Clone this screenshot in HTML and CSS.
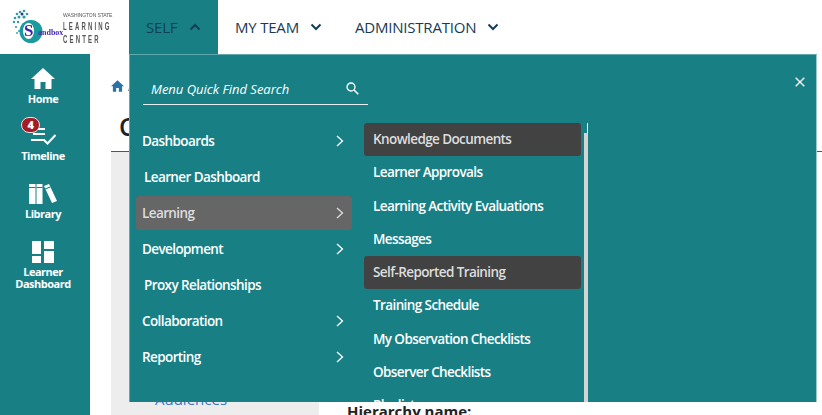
FILE: index.html
```html
<!DOCTYPE html>
<html lang="en">
<head>
<meta charset="utf-8">
<title>Learning Center</title>
<link rel="stylesheet" href="styles.css">
</head>
<body>
<header class="topbar">
  <div class="logo">
    <svg class="logo-mark" width="64" height="54" viewBox="0 0 64 54">
      <circle cx="31" cy="31.500" r="11.500" fill="#1a9a9e"/>
      <ellipse cx="28.500" cy="31" rx="5.500" ry="8" fill="#fff"/>
      <g fill="#2f9aa5"><circle cx="17" cy="14" r="1.300"/><circle cx="20" cy="12" r="1.300"/><circle cx="24" cy="11" r="1.300"/><circle cx="15" cy="18" r="1.300"/><circle cx="19" cy="17" r="1.500"/><circle cx="24" cy="17" r="1.600"/><circle cx="27" cy="14" r="1.300"/><circle cx="14" cy="22" r="1.200"/><circle cx="18" cy="22" r="1.200"/><circle cx="16" cy="27" r="1.100"/><circle cx="19" cy="31" r="1"/><circle cx="17" cy="33" r=".9"/></g>
      <circle cx="22" cy="14" r="1.500" fill="#243c7a"/>
    </svg>
    <span class="logo-s">S</span><span class="logo-sandbox">andbox</span>
    <div class="logo-text">
      <span class="logo-state">WASHINGTON STATE</span>
      <span class="logo-line">LEARNING</span>
      <span class="logo-line">CENTER</span>
    </div>
  </div>
  <nav class="topnav">
    <a class="tab active">SELF
      <svg class="chev" width="12" height="8" viewBox="0 0 12 8"><path d="M1.500 6.500 6 2l4.500 4.500" fill="none" stroke="#123f55" stroke-width="2"/></svg>
    </a>
    <a class="tab">MY TEAM
      <svg class="chev" width="12" height="8" viewBox="0 0 12 8"><path d="M1.500 1.500 6 6l4.500-4.500" fill="none" stroke="#123f55" stroke-width="2"/></svg>
    </a>
    <a class="tab">ADMINISTRATION
      <svg class="chev" width="12" height="8" viewBox="0 0 12 8"><path d="M1.500 1.500 6 6l4.500-4.500" fill="none" stroke="#123f55" stroke-width="2"/></svg>
    </a>
  </nav>
</header>

<div class="body-row">
  <aside class="sidebar">
    <a class="side-item home">
      <svg width="24" height="21" viewBox="0 0 24 21"><path d="M12 0 0 11h3.500v10h6v-7h5v7h6V11H24z" fill="#fff"/></svg>
      <span>Home</span>
    </a>
    <a class="side-item timeline">
      <span class="badge">4</span>
      <svg width="26" height="20" viewBox="0 0 26 20"><g fill="#fff"><rect x="7" y="1" width="8" height="2"/><rect x="3" y="6" width="12" height="2"/><rect x="1" y="12" width="13" height="2"/></g><path d="M13.500 12.500l4 4 8-8.500" fill="none" stroke="#fff" stroke-width="2"/></svg>
      <span>Timeline</span>
    </a>
    <a class="side-item library">
      <svg width="28" height="20" viewBox="0 0 28 20"><g fill="#fff"><rect x="0" y="0" width="6.500" height="20"/><rect x="7.500" y="0" width="6" height="20"/><path d="M15 2 20 0l8 17-5 2z"/></g><g fill="#188085"><rect x="0" y="3" width="6.500" height="1"/><rect x="7.500" y="3" width="6" height="1"/><path d="M16 4.500l5-2 .4 1-5 2z"/></g></svg>
      <span>Library</span>
    </a>
    <a class="side-item dash">
      <svg width="22" height="22" viewBox="0 0 22 22"><g fill="#fff"><rect x="0" y="0" width="9" height="13"/><rect x="12" y="0" width="10" height="8"/><rect x="0" y="15" width="9" height="7"/><rect x="12" y="10" width="10" height="12"/></g></svg>
      <span>Learner<br>Dashboard</span>
    </a>
  </aside>

  <main class="content">
    <div class="crumbs">
      <svg width="13" height="12" viewBox="0 0 24 21"><path d="M12 0 0 11h3.500v10h6v-7h5v7h6V11H24z" fill="#2a73a8"/></svg>
      <span class="crumb-text">A</span>
    </div>
    <h1 class="page-title">C</h1>
    <div class="columns">
      <div class="left-col"><a class="audiences">Audiences</a></div>
      <div class="right-col"><strong class="hier">Hierarchy name:</strong></div>
    </div>
  </main>
</div>

<section class="mega">
  <button class="close" aria-label="Close">
    <svg width="10" height="10" viewBox="0 0 10 10"><path d="M.7.7l8.600 8.600M9.300.7.700 9.300" stroke="#fff" stroke-width="1.300"/></svg>
  </button>
  <div class="search">
    <span>Menu Quick Find Search</span>
    <svg width="13" height="13" viewBox="0 0 13 13"><circle cx="5" cy="5" r="4" fill="none" stroke="#fff" stroke-width="1.300"/><path d="M8 8l4.300 4.300" stroke="#fff" stroke-width="1.500"/></svg>
  </div>
  <div class="menu-cols">
    <ul class="menu-l1">
      <li class="has-sub">Dashboards<svg class="arr" width="8" height="12" viewBox="0 0 8 12"><path d="M1 1l5.500 5L1 11" fill="none" stroke="#fff" stroke-width="1.300"/></svg></li>
      <li class="indent">Learner Dashboard</li>
      <li class="has-sub selected">Learning<svg class="arr" width="8" height="12" viewBox="0 0 8 12"><path d="M1 1l5.500 5L1 11" fill="none" stroke="#ddd" stroke-width="1.300"/></svg></li>
      <li class="has-sub">Development<svg class="arr" width="8" height="12" viewBox="0 0 8 12"><path d="M1 1l5.500 5L1 11" fill="none" stroke="#fff" stroke-width="1.300"/></svg></li>
      <li class="indent">Proxy Relationships</li>
      <li class="has-sub">Collaboration<svg class="arr" width="8" height="12" viewBox="0 0 8 12"><path d="M1 1l5.500 5L1 11" fill="none" stroke="#fff" stroke-width="1.300"/></svg></li>
      <li class="has-sub">Reporting<svg class="arr" width="8" height="12" viewBox="0 0 8 12"><path d="M1 1l5.500 5L1 11" fill="none" stroke="#fff" stroke-width="1.300"/></svg></li>
    </ul>
    <div class="l2-wrap">
      <ul class="menu-l2">
        <li class="dark">Knowledge Documents</li>
        <li>Learner Approvals</li>
        <li>Learning Activity Evaluations</li>
        <li>Messages</li>
        <li class="dark">Self-Reported Training</li>
        <li>Training Schedule</li>
        <li>My Observation Checklists</li>
        <li>Observer Checklists</li>
        <li>Playlists</li>
      </ul>
      <div class="scroll"><div class="thumb"></div></div>
    </div>
  </div>
</section>
</body>
</html>
```

FILE: styles.css
```css
* { box-sizing: border-box; }
html, body { margin: 0; height: 100%; overflow: hidden; }
body {
  position: relative;
  width: 822px;
  height: 415px;
  background: #fff;
  font-family: "Open Sans", "Liberation Sans", sans-serif;
  color: #222;
}
ul { list-style: none; margin: 0; padding: 0; }

.topbar { display: flex; height: 54px; background: #fff; }
.logo { position: relative; width: 129px; height: 54px; flex: none; filter: blur(.3px); }
.logo-mark { position: absolute; left: 0; top: 0; }
.logo-s { position: absolute; left: 24px; top: 22px; font: bold 17px/18px "Liberation Serif", serif; color: #3a1fa8; }
.logo-sandbox { position: absolute; left: 38px; top: 28px; font: bold 8px/10px "Liberation Serif", serif; color: #4a2ab0; }
.logo-text { position: absolute; left: 63px; top: 12px; display: flex; flex-direction: column; color: #555; font-family: "Liberation Sans", sans-serif; }
.logo-state { font-size: 5px; line-height: 7px; white-space: nowrap; letter-spacing: -.1px; margin-bottom: 1px; }
.logo-line {
  font-size: 10px; line-height: 13px; letter-spacing: 3.600px; font-weight: bold; color: #555;
  transform: scaleX(.6); transform-origin: left center; white-space: nowrap;
}

.topnav { display: flex; }
.tab {
  display: flex; align-items: center; gap: 11px;
  height: 54px; padding: 0 16px 0 17px;
  font-size: 15px; letter-spacing: -.2px; color: #173a57;
}
.tab.active { background: #188085; width: 89px; gap: 12px; color: #123f55; }
.chev { flex: none; }

.body-row { display: flex; height: 361px; }
.sidebar { width: 90px; flex: none; background: #188085; display: flex; flex-direction: column; align-items: center; padding: 14px 4px 0 0; }
.side-item {
  position: relative;
  display: flex; flex-direction: column; align-items: center;
  color: #fff; font-size: 11px; font-weight: 700; letter-spacing: -.5px; line-height: 12px; text-align: center;
}
.side-item.home { gap: 4px; height: 59px; }
.side-item.timeline { gap: 3px; height: 57px; }
.side-item.library { gap: 4px; height: 57px; }
.side-item.dash { gap: 3px; }
.badge {
  position: absolute; left: 0; top: -10px;
  width: 19px; height: 16px; border-radius: 8px;
  background: #a51c24; border: 1px solid #f2dede;
  color: #fff; font-size: 11px; font-weight: 800; letter-spacing: 0; line-height: 14px; text-align: center;
  z-index: 1;
}

.content { flex: 1; padding: 25px 0 0 21px; min-width: 0; }
.crumbs { display: flex; align-items: center; gap: 4px; height: 14px; font-size: 12px; color: #2a73a8; }
.page-title { margin: 0; height: 59px; padding: 18px 0 0 8px; font-size: 25px; line-height: 30px; font-weight: 600; color: #222; border-bottom: 1px solid #555; }
.columns { display: flex; height: 263px; }
.left-col { width: 208px; background: #ededed; padding: 236px 0 0 44px; overflow: hidden; }
.audiences { font-size: 15px; line-height: 20px; color: #3a76c4; }
.right-col { flex: 1; padding: 248px 0 0 28px; overflow: hidden; }
.hier { font-size: 15px; line-height: 20px; font-weight: 700; color: #222; }

.mega {
  position: absolute; left: 129px; top: 54px;
  width: 688px; height: 348px;
  background: #188085;
  border-top: 1px solid #5fa9ac;
  border-left: 1px solid #5fa9ac;
  border-right: 1px solid #9cc8ca;
  color: #fff;
}
.close { position: absolute; right: 11px; top: 22px; width: 10px; height: 10px; padding: 0; border: 0; background: none; display: block; line-height: 0; }
.search {
  position: absolute; left: 13px; top: 20px;
  width: 225px; height: 30px;
  padding: 0 9px 2px 8px;
  display: flex; align-items: center; justify-content: space-between;
  border-bottom: 1px solid #e6f1f1;
  font-size: 13px; font-style: italic;
}
.menu-cols { display: flex; padding-top: 68px; }
.menu-l1 { width: 216px; margin: 1px 0 0 6px; flex: none; }
.menu-l1 li {
  display: flex; align-items: center; justify-content: space-between;
  height: 34px; margin-bottom: 2px; padding: 0 8px 0 6px;
  font-size: 13.500px; font-weight: 600; letter-spacing: -.6px; border-radius: 3px;
}
.menu-l1 li.indent { padding-left: 8px; }
.menu-l1 li.selected { background: #666; color: #ddd; }
.l2-wrap { position: relative; display: flex; height: 279px; margin-left: 12px; overflow: hidden; }
.menu-l2 { width: 217px; flex: none; }
.menu-l2 li {
  height: 33.250px; line-height: 33px; padding-left: 9px;
  font-size: 13.500px; font-weight: 600; letter-spacing: -.6px; border-radius: 3px; white-space: nowrap;
}
.menu-l2 li.dark { background: #424242; color: #ddd; }
.scroll { position: relative; width: 4px; margin-left: 3px; border-right: 1px solid #fff; }
.thumb { position: absolute; left: 0; top: 10px; width: 4px; height: 100%; background: #d4d4d4; }
```
